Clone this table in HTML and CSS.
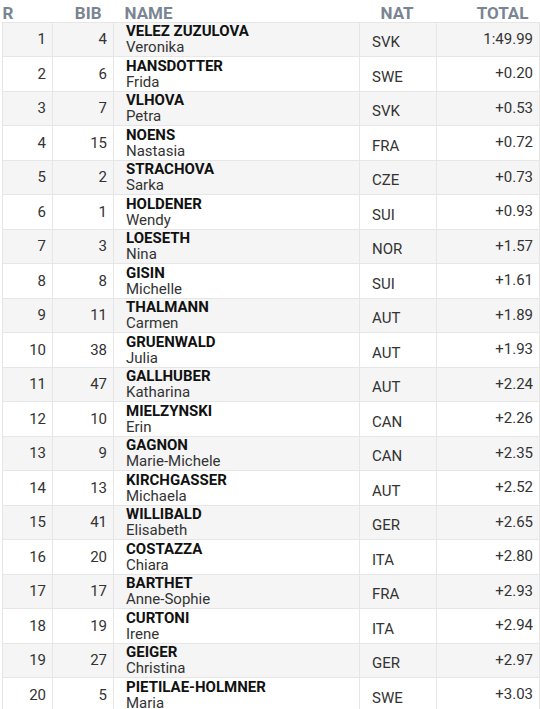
FILE: index.html
```html
<!DOCTYPE html>
<html>
<head>
<meta charset="utf-8">
<link rel="stylesheet" href="styles.css">
</head>
<body>
<table class="results">
  <colgroup>
    <col class="c-r"><col class="c-bib"><col class="c-name"><col class="c-nat"><col class="c-total">
  </colgroup>
  <thead>
    <tr><th class="h-r">R</th><th class="h-bib">BIB</th><th class="h-name">NAME</th><th class="h-nat">NAT</th><th class="h-total">TOTAL</th></tr>
  </thead>
  <tbody>
    <tr><td class="num">1</td><td class="num">4</td><td class="name"><b>VELEZ ZUZULOVA</b><span>Veronika</span></td><td class="nat">SVK</td><td class="total">1:49.99</td></tr>
    <tr><td class="num">2</td><td class="num">6</td><td class="name"><b>HANSDOTTER</b><span>Frida</span></td><td class="nat">SWE</td><td class="total">+0.20</td></tr>
    <tr><td class="num">3</td><td class="num">7</td><td class="name"><b>VLHOVA</b><span>Petra</span></td><td class="nat">SVK</td><td class="total">+0.53</td></tr>
    <tr><td class="num">4</td><td class="num">15</td><td class="name"><b>NOENS</b><span>Nastasia</span></td><td class="nat">FRA</td><td class="total">+0.72</td></tr>
    <tr><td class="num">5</td><td class="num">2</td><td class="name"><b>STRACHOVA</b><span>Sarka</span></td><td class="nat">CZE</td><td class="total">+0.73</td></tr>
    <tr><td class="num">6</td><td class="num">1</td><td class="name"><b>HOLDENER</b><span>Wendy</span></td><td class="nat">SUI</td><td class="total">+0.93</td></tr>
    <tr><td class="num">7</td><td class="num">3</td><td class="name"><b>LOESETH</b><span>Nina</span></td><td class="nat">NOR</td><td class="total">+1.57</td></tr>
    <tr><td class="num">8</td><td class="num">8</td><td class="name"><b>GISIN</b><span>Michelle</span></td><td class="nat">SUI</td><td class="total">+1.61</td></tr>
    <tr><td class="num">9</td><td class="num">11</td><td class="name"><b>THALMANN</b><span>Carmen</span></td><td class="nat">AUT</td><td class="total">+1.89</td></tr>
    <tr><td class="num">10</td><td class="num">38</td><td class="name"><b>GRUENWALD</b><span>Julia</span></td><td class="nat">AUT</td><td class="total">+1.93</td></tr>
    <tr><td class="num">11</td><td class="num">47</td><td class="name"><b>GALLHUBER</b><span>Katharina</span></td><td class="nat">AUT</td><td class="total">+2.24</td></tr>
    <tr><td class="num">12</td><td class="num">10</td><td class="name"><b>MIELZYNSKI</b><span>Erin</span></td><td class="nat">CAN</td><td class="total">+2.26</td></tr>
    <tr><td class="num">13</td><td class="num">9</td><td class="name"><b>GAGNON</b><span>Marie-Michele</span></td><td class="nat">CAN</td><td class="total">+2.35</td></tr>
    <tr><td class="num">14</td><td class="num">13</td><td class="name"><b>KIRCHGASSER</b><span>Michaela</span></td><td class="nat">AUT</td><td class="total">+2.52</td></tr>
    <tr><td class="num">15</td><td class="num">41</td><td class="name"><b>WILLIBALD</b><span>Elisabeth</span></td><td class="nat">GER</td><td class="total">+2.65</td></tr>
    <tr><td class="num">16</td><td class="num">20</td><td class="name"><b>COSTAZZA</b><span>Chiara</span></td><td class="nat">ITA</td><td class="total">+2.80</td></tr>
    <tr><td class="num">17</td><td class="num">17</td><td class="name"><b>BARTHET</b><span>Anne-Sophie</span></td><td class="nat">FRA</td><td class="total">+2.93</td></tr>
    <tr><td class="num">18</td><td class="num">19</td><td class="name"><b>CURTONI</b><span>Irene</span></td><td class="nat">ITA</td><td class="total">+2.94</td></tr>
    <tr><td class="num">19</td><td class="num">27</td><td class="name"><b>GEIGER</b><span>Christina</span></td><td class="nat">GER</td><td class="total">+2.97</td></tr>
    <tr><td class="num">20</td><td class="num">5</td><td class="name"><b>PIETILAE-HOLMNER</b><span>Maria</span></td><td class="nat">SWE</td><td class="total">+3.03</td></tr>
  </tbody>
</table>
</body>
</html>
```
FILE: styles.css
```css
html, body {
  margin: 0;
  padding: 0;
  background: #ffffff;
}
body {
  font-family: Roboto, "Liberation Sans", sans-serif;
  color: #333333;
}
.results {
  border-collapse: collapse;
  table-layout: fixed;
  width: 537px;
  margin-left: 2px;
}
.c-r { width: 50px; }
.c-bib { width: 61px; }
.c-name { width: 246px; }
.c-nat { width: 77px; }
.c-total { width: 103px; }

.results th {
  height: 22px;
  box-sizing: border-box;
  padding: 0;
  font-size: 17px;
  font-weight: 700;
  color: #7a8594;
  line-height: 17px;
  vertical-align: bottom;
}
.h-r { text-align: left; }
.h-bib { text-align: right; padding-right: 12px !important; }
.h-name { text-align: left; padding-left: 11px !important; }
.h-nat { text-align: left; padding-left: 21px !important; }
.h-total { text-align: right; padding-right: 11px !important; }

.results td {
  height: 34.5px;
  box-sizing: border-box;
  padding: 0;
  border: 1px solid #e6e6e6;
  font-size: 15px;
  line-height: 16px;
}
.results tbody tr:nth-child(odd) td { background: #f5f5f5; }

.num {
  text-align: right;
  padding-right: 6px !important;
  vertical-align: middle;
}
.name {
  padding-left: 12px !important;
  vertical-align: middle;
}
.name b, .name span {
  display: block;
}
.name b {
  font-weight: 700;
  color: #111111;
}
.name span {
  color: #333333;
}
.nat {
  padding-left: 12px !important;
  padding-top: 6px !important;
  vertical-align: middle;
}
.total {
  text-align: right;
  padding-right: 6px !important;
  padding-bottom: 1px !important;
  vertical-align: middle;
}
```
